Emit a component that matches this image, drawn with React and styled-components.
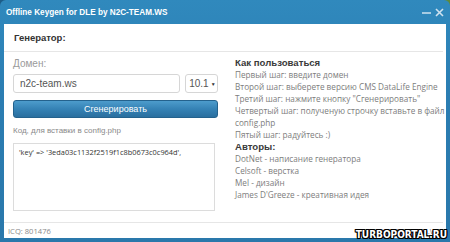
import React from 'react'
import styled, { createGlobalStyle } from 'styled-components'

const Global = createGlobalStyle`
    html, body {
        margin:0;
        padding:0;
        background:linear-gradient(90deg, #1d5d88 0%, #2c7cb0 50%, #5d8a3c 100%);
    }
`

const Window = styled.div`
    position:relative;
    width:450px;
    height:242px;
    display:flex;
    flex-direction:column;
    background:linear-gradient(180deg, #3089bd 0%, #2b7db2 40%, #2a78ab 100%);
    border-radius:6px 6px 0 0;
    overflow:hidden;
    font-family:"Liberation Sans", Arial, sans-serif;
`

const TitleBar = styled.div`
    height:24px;
    display:flex;
    align-items:center;
    justify-content:space-between;
    padding:0 6px 0 6px;
    color:#fff;
    font-weight:bold;
    font-size:8.2px;
`

const WinButtons = styled.div`
    display:flex;
    gap:4px;
    align-items:center;
`

const Body = styled.div`
    flex:1;
    margin:0 4px 4px 4px;
    background:#fff;
    display:flex;
    flex-direction:column;
`

const Header = styled.div`
    height:27px;
    display:flex;
    align-items:center;
    padding-left:10px;
    border-bottom:1px solid #e6e6e6;
    margin-right:3px;
    font-weight:bold;
    font-size:9.5px;
    color:#333;
`

const Main = styled.div`
    height:170px;
    display:grid;
    grid-template-columns:205px 1fr;
    column-gap:17px;
    padding-left:9px;
`

const Left = styled.div`
    display:flex;
    flex-direction:column;
    padding-top:6px;
`

const Label = styled.div`
    font-size:${p => p.small ? '8px' : '10px'};
    line-height:${p => p.small ? '10px' : '12px'};
    color:${p => p.small ? '#8a8a8a' : '#9a9a9a'};
    margin-top:${p => p.small ? '8px' : '0'};
`

const Row = styled.div`
    display:flex;
    gap:5px;
    margin-top:4px;
`

const Input = styled.div`
    height:19px;
    box-sizing:border-box;
    border:1px solid #d6d6d6;
    border-radius:3px;
    display:flex;
    align-items:center;
    padding-left:${p => p.select ? '3px' : '6px'};
    font-size:10px;
    color:#555;
    width:${p => p.w}px;
    gap:2px;
`

const Caret = styled.span`
    font-size:5px;
    color:#333;
`

const Button = styled.div`
    margin-top:7px;
    height:18px;
    box-sizing:border-box;
    border:1px solid #24628d;
    border-radius:3px;
    background:linear-gradient(180deg, #4d9ccc 0%, #3582b5 50%, #2a6f9f 100%);
    color:#fff;
    font-size:9px;
    display:flex;
    align-items:center;
    justify-content:center;
`

const Code = styled.div`
    margin-top:7px;
    width:202px;
    height:68px;
    box-sizing:border-box;
    border:1px solid #dcdcdc;
    padding:3px 5px;
    font-family:"Open Sans", sans-serif;
    font-size:7.4px;
    color:#333;
`

const Right = styled.div`
    padding-top:5px;
    font-family:"Open Sans", sans-serif;
`

const Title = styled.div`
    font-family:"Liberation Sans", Arial, sans-serif;
    font-weight:bold;
    font-size:9.6px;
    line-height:12px;
    color:#3a3a3a;
`

const Line = styled.div`
    font-size:8.2px;
    line-height:12px;
    color:#7d7d7d;
    white-space:nowrap;
`

const Footer = styled.div`
    height:15px;
    border-top:1px solid #e6e6e6;
    margin-right:3px;
    display:flex;
    align-items:center;
    justify-content:space-between;
    padding:0 2px 0 4px;
    font-family:"Open Sans", sans-serif;
    font-size:7.6px;
    color:#8a8a8a;
`

const Watermark = styled.div`
    position:absolute;
    right:3px;
    bottom:1px;
    font-family:"DejaVu Sans Condensed", "DejaVu Sans", sans-serif;
    font-stretch:condensed;
    font-weight:bold;
    font-size:10px;
    line-height:12px;
    color:#fff;
    text-shadow:1px 0 0 #000, -1px 0 0 #000, 0 1px 0 #000, 0 -1px 0 #000, 1px 1px 0 #000, -1px -1px 0 #000, 1px -1px 0 #000, -1px 1px 0 #000;
`

const steps = [
    'Первый шаг: введите домен',
    'Второй шаг: выберете версию CMS DataLife Engine',
    'Третий шаг: нажмите кнопку "Сгенерировать"',
    'Четвертый шаг: полученую строчку вставьте в файл',
    'config.php',
    'Пятый шаг: радуйтесь :)',
]

const authors = [
    'DotNet - написание генератора',
    'Celsoft - верстка',
    'Mel - дизайн',
    "James D'Greeze - креативная идея",
]

export default function App() {
    return (
        <>
            <Global />
            <Window>
                <TitleBar>
                    <span>Offline Keygen for DLE by N2C-TEAM.WS</span>
                    <WinButtons>
                        <svg width="9" height="9" viewBox="0 0 9 9">
                            <path d="M0 5h9" stroke="#cfe2ef" strokeWidth="1.4" />
                        </svg>
                        <svg width="9" height="9" viewBox="0 0 9 9">
                            <path d="M1 1l7 7M8 1l-7 7" stroke="#cfe2ef" strokeWidth="1.6" />
                        </svg>
                    </WinButtons>
                </TitleBar>
                <Body>
                    <Header>Генератор:</Header>
                    <Main>
                        <Left>
                            <Label>Домен:</Label>
                            <Row>
                                <Input w={168}>n2c-team.ws</Input>
                                <Input w={33} select>10.1<Caret>▼</Caret></Input>
                            </Row>
                            <Button>Сгенерировать</Button>
                            <Label small>Код, для вставки в config.php</Label>
                            <Code>'key' =&gt; '3eda03c1132f2519f1c8b0673c0c964d',</Code>
                        </Left>
                        <Right>
                            <Title>Как пользоваться</Title>
                            {steps.map(s => <Line key={s}>{s}</Line>)}
                            <Title>Авторы:</Title>
                            {authors.map(a => <Line key={a}>{a}</Line>)}
                        </Right>
                    </Main>
                    <Footer>
                        <span>ICQ: 801476</span>
                        <span>N2C-TEAM.WS</span>
                    </Footer>
                </Body>
                <Watermark>TURBOPORTAL.RU</Watermark>
            </Window>
        </>
    )
}
